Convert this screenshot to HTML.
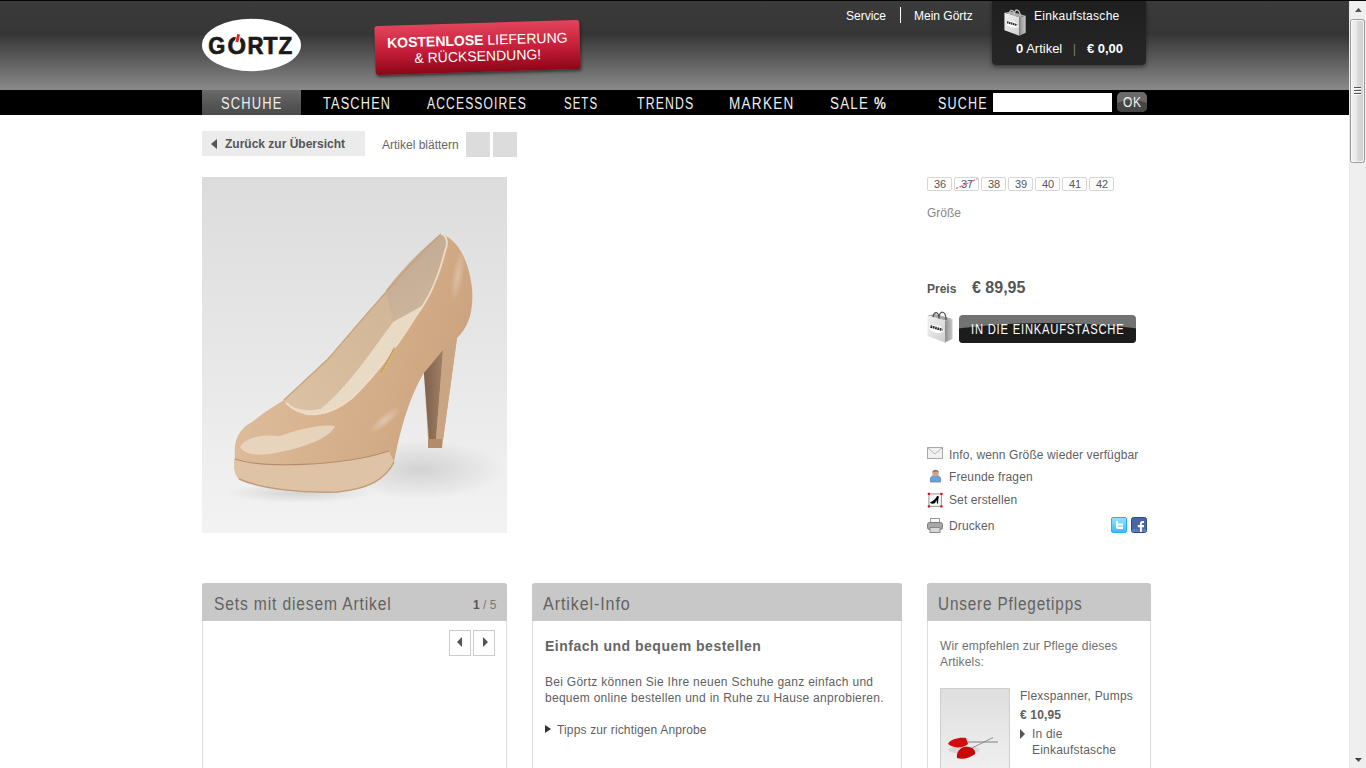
<!DOCTYPE html>
<html><head><meta charset="utf-8">
<style>
*{margin:0;padding:0;box-sizing:border-box}
html,body{width:1366px;height:768px;overflow:hidden;background:#fff;font-family:"Liberation Sans",sans-serif;color:#555}
.a{position:absolute;white-space:nowrap}
#hdr{position:absolute;left:0;top:0;width:1349px;height:90px;background:linear-gradient(to bottom,#1a1a1a 0,#1a1a1a 1px,#3b3b3b 1px,#363636 34px,#8a8a8a 90px)}
#nav{position:absolute;left:0;top:90px;width:1349px;height:25px;background:#000}
.nv{position:absolute;top:90px;height:25px;line-height:27px;font-size:16px;color:#eee}
.nvt span{display:inline-block;transform-origin:0 0;letter-spacing:1.5px}
.tl{font-size:12px;color:#fff;top:9px}
#cart{position:absolute;left:992px;top:0;width:154px;height:65px;background:linear-gradient(#1f1f1f,#262626);border-radius:0 0 4px 4px;box-shadow:0 2px 4px rgba(0,0,0,.45)}
#banner{position:absolute;left:375px;top:23px;width:205px;height:49px;transform:rotate(-1.7deg);background:linear-gradient(#e2445c,#c41c38 55%,#8c0618);border-radius:3px;box-shadow:1px 2px 3px rgba(0,0,0,.5);color:#fff;font-size:14px;line-height:16px;text-align:center;padding-top:9px}
#sb{position:absolute;left:1349px;top:1px;width:17px;height:767px;background:linear-gradient(to right,#e6e6e6,#f0f0f0 2px,#eeeeee)}
#topl{position:absolute;left:0;top:0;width:1366px;height:1px;background:#050505}

.pnl{height:200px;border:1px solid #dcdcdc;border-top:0;border-radius:3px 3px 0 0}
.ph{height:38px;margin:0 -1px;background:#c8c8c8;border-radius:3px 3px 0 0;font-size:18px;color:#626262;padding:11px 0 0 12px;line-height:21px}
.pt{display:inline-block;transform-origin:0 0;letter-spacing:1px}
.arr{width:22px;height:26px;border:1px solid #ccc;background:#fff}
.arr i{position:absolute;top:6px;width:0;height:0;border-top:5px solid transparent;border-bottom:5px solid transparent}

.sz{position:absolute;top:0;width:25px;height:14px;border:1px solid #d6d6d6;border-radius:2px;font-size:11px;line-height:13px;text-align:center;color:#555;padding-left:1px}
</style></head><body>
<div id="hdr"></div>
<div id="nav"></div>
<!-- logo -->
<svg class="a" style="left:200px;top:17px" width="104" height="57" viewBox="0 0 104 57">
<ellipse cx="51.5" cy="28" rx="49.5" ry="26.2" fill="#fff"/>
<g font-family="Liberation Sans" font-weight="bold" font-size="23.5" fill="#1a1a1c" stroke="#1a1a1c" stroke-width="0.7">
<text x="8.3" y="37" textLength="17" lengthAdjust="spacingAndGlyphs">G</text>
<text x="27.6" y="37" textLength="18.5" lengthAdjust="spacingAndGlyphs">O</text>
<text x="47.5" y="37" textLength="16" lengthAdjust="spacingAndGlyphs">R</text>
<text x="63.6" y="37" textLength="14" lengthAdjust="spacingAndGlyphs">T</text>
<text x="78.6" y="37" textLength="13.8" lengthAdjust="spacingAndGlyphs">Z</text>
</g>
<path d="M34.3,26 L37,15.8 L41.3,16.5 L39.5,26.4Z" fill="#fff"/>
<path d="M35.5,24.9 L37.2,16.9 L40,17.4 L38.3,25.3Z" fill="#e5231b"/>
</svg>
<div id="banner"><b>KOSTENLOSE</b> LIEFERUNG<br>&amp; RÜCKSENDUNG!</div>
<div class="a tl" style="left:846px">Service</div>
<div class="a" style="left:900px;top:7px;width:1px;height:16px;background:#fff"></div>
<div class="a tl" style="left:914px">Mein Görtz</div>
<div id="cart"></div>
<svg class="a" style="left:1004px;top:9px" width="22.1" height="27.2" viewBox="0 0 26 32">
<defs><linearGradient id="bf1004" x1="0" y1="0" x2="1" y2="1"><stop offset="0" stop-color="#f2f2f2"/><stop offset="1" stop-color="#cfcfcf"/></linearGradient>
<linearGradient id="bs1004" x1="0" y1="0" x2="1" y2="0"><stop offset="0" stop-color="#8c8c8c"/><stop offset="1" stop-color="#c8c8c8"/></linearGradient></defs>
<path d="M0.5,4.5 L8,3 L25.5,8 L18,9.5Z" fill="#a8a8a8"/>
<path d="M6,8 C6,0 12,-1 12,8 M12,7 C12,-1 19,-1 19,9" fill="none" stroke="#bbb" stroke-width="1.6"/>
<path d="M0.5,4.5 L18,9.5 L18,31.5 L0.5,25Z" fill="url(#bf1004)"/>
<path d="M18,9.5 L25.5,8 L25.5,28 L18,31.5Z" fill="url(#bs1004)"/>
<ellipse cx="9.5" cy="18" rx="7.5" ry="3.6" transform="rotate(16 9.5 18)" fill="#fff"/>
<path d="M3.5,15.5 L15.5,19" stroke="#222" stroke-width="2.4" stroke-dasharray="1.8,0.6"/>
<circle cx="9" cy="16.3" r="0.8" fill="#e33"/>
</svg>
<div class="a tl" style="left:1034px;top:9px;letter-spacing:0.3px">Einkaufstasche</div>
<div class="a" style="left:1016px;top:41px;font-size:13px;color:#fff"><b>0</b> Artikel <span style="color:#777;margin:0 7px 0 7px">|</span> <b>€ 0,00</b></div>
<div class="nv" style="left:202px;width:99px;background:linear-gradient(#6a6a6a,#555 60%,#4a4a4a)"></div>
<div class="nv nvt" style="left:221.2px"><span style="transform:scaleX(0.805)">SCHUHE</span></div>
<div class="nv nvt" style="left:322.6px"><span style="transform:scaleX(0.795)">TASCHEN</span></div>
<div class="nv nvt" style="left:427.0px"><span style="transform:scaleX(0.756)">ACCESSOIRES</span></div>
<div class="nv nvt" style="left:563.6px"><span style="transform:scaleX(0.713)">SETS</span></div>
<div class="nv nvt" style="left:637.0px"><span style="transform:scaleX(0.768)">TRENDS</span></div>
<div class="nv nvt" style="left:729.2px"><span style="transform:scaleX(0.847)">MARKEN</span></div>
<div class="nv nvt" style="left:830.2px"><span style="transform:scaleX(0.833)">SALE <b>%</b></span></div>
<div class="nv nvt" style="left:937.9px"><span style="transform:scaleX(0.783)">SUCHE</span></div>
<div class="a" style="left:993px;top:93px;width:119px;height:19px;background:#fff"></div>
<div class="a" style="left:1117px;top:92px;width:30px;height:20px;border-radius:5px;background:#6a6a6a;overflow:hidden">
<div style="position:absolute;left:-10px;top:8px;width:50px;height:30px;border-radius:50%;background:#464646"></div>
<div style="position:absolute;left:6.3px;top:0;height:20px;line-height:21px;font-size:14px;color:#f0f0f0;white-space:nowrap"><span style="display:inline-block;transform-origin:0 0;transform:scaleX(0.86);letter-spacing:0.6px">OK</span></div>
</div>

<!-- breadcrumb -->
<div class="a" style="left:202px;top:131px;width:163px;height:25px;background:#ebebeb"></div>
<div class="a" style="left:211px;top:138.5px;width:0;height:0;border-top:5px solid transparent;border-bottom:5px solid transparent;border-right:6px solid #555"></div>
<div class="a" style="left:225px;top:137px;font-size:12px;font-weight:bold;color:#555">Zurück zur Übersicht</div>
<div class="a" style="left:382px;top:138px;font-size:12px;color:#666">Artikel blättern</div>
<div class="a" style="left:466px;top:132px;width:24px;height:25px;background:#dcdcdc"></div>
<div class="a" style="left:493px;top:132px;width:24px;height:25px;background:#dcdcdc"></div>
<!-- product image -->
<svg class="a" style="left:202px;top:177px" width="305" height="356" viewBox="202 177 305 356">
<defs>
<linearGradient id="bgg" x1="0" y1="0" x2="0" y2="1"><stop offset="0" stop-color="#dcdcdc"/><stop offset="0.5" stop-color="#e7e7e7"/><stop offset="1" stop-color="#f3f3f3"/></linearGradient>
<radialGradient id="shd" cx="0.5" cy="0.5" r="0.5"><stop offset="0" stop-color="#000" stop-opacity="0.12"/><stop offset="1" stop-color="#000" stop-opacity="0"/></radialGradient>
<linearGradient id="body" x1="0" y1="0" x2="1" y2="0.3"><stop offset="0" stop-color="#e0c2a4"/><stop offset="0.5" stop-color="#d8b390"/><stop offset="1" stop-color="#cda47f"/></linearGradient>
<linearGradient id="lin" x1="1" y1="0" x2="0" y2="1"><stop offset="0" stop-color="#cdb398"/><stop offset="0.5" stop-color="#d3b899"/><stop offset="1" stop-color="#dcc2a4"/></linearGradient>
<linearGradient id="heelg" x1="0" y1="0" x2="1" y2="0"><stop offset="0" stop-color="#7d604c"/><stop offset="1" stop-color="#a07f66"/></linearGradient>
<radialGradient id="gl" cx="0.5" cy="0.5" r="0.5"><stop offset="0" stop-color="#fff" stop-opacity="0.55"/><stop offset="1" stop-color="#fff" stop-opacity="0"/></radialGradient>
</defs>
<rect x="202" y="177" width="305" height="356" fill="url(#bgg)"/>
<ellipse cx="420" cy="470" rx="85" ry="30" fill="url(#shd)"/>
<ellipse cx="300" cy="493" rx="75" ry="10" fill="url(#shd)"/>
<!-- body -->
<path d="M235,456 C233,440 240,428 252,422 C262,414 274,406 284,400 L328,359 C360,322 410,262 441,234 C455,238 468,255 472,288 C474,312 468,328 457,338 L443,440 L442,448 L428,448 L428,439 L424,373 C410,395 400,430 394,462 C385,480 368,489 337,492 C300,493 262,489 239,479 C234,474 233,465 235,456Z" fill="url(#body)"/>
<!-- platform band -->
<path d="M235,459 C262,468 340,467 389,451 L394,462 C385,480 368,489 337,492 C300,493 262,489 239,479 C234,474 233,465 235,459Z" fill="#dfc3a6"/>
<path d="M235,459 C262,468 340,467 389,451" fill="none" stroke="#b58d6c" stroke-width="1.2"/>
<path d="M239,479 C262,489 300,493 337,492 C368,489 385,480 394,462" fill="none" stroke="#c29a76" stroke-width="1.5"/>
<!-- lining -->
<path d="M284,401 L328,359 C360,322 410,262 441,234 C448,236 448,244 445,251 C438,280 428,300 416,316 C398,345 376,375 352,398 C330,416 305,421 284,401Z" fill="#e8dac5"/>
<path d="M284,401 L328,359 C360,322 410,262 441,234 L424,297 L393,322 C375,345 350,385 320,409 C306,412 292,409 284,401Z" fill="url(#lin)"/>
<defs><linearGradient id="hc" x1="0" y1="0" x2="0.3" y2="1"><stop offset="0" stop-color="#c0a892"/><stop offset="1" stop-color="#cdb59c"/></linearGradient></defs><path d="M386,290 C400,272 420,250 441,234 C447,237 447,244 445,251 C440,272 432,292 422,306 L393,322 C390,310 388,300 386,290Z" fill="url(#hc)"/>
<path d="M320,409 C350,385 375,345 393,322" fill="none" stroke="#cdb69c" stroke-width="1" stroke-dasharray="1.5,1.5"/>
<!-- collar edge highlight -->
<path d="M284,400 L328,359 C360,322 410,262 441,234" fill="none" stroke="#c9a07a" stroke-width="1.2"/>
<path d="M441,234 C448,236 448,244 445,251 C438,280 428,300 416,316 C398,345 376,375 352,398 C330,416 305,421 286,403" fill="none" stroke="#efdcc6" stroke-width="1.8"/>
<!-- heel -->
<path d="M424,373 L443,350 L436,440 L429,440Z" fill="url(#heelg)"/>
<path d="M457,338 L443,440 L436,440 L443,350Z" fill="#caa584"/>
<rect x="428" y="439" width="14" height="9" fill="#b38c6a"/>
<!-- label -->
<path d="M379,374 L394,347 L398,349 L383,376Z" fill="#d4b07c"/><path d="M381,372 L394,349" stroke="#8a6a40" stroke-width="0.6" stroke-dasharray="1,0.8"/>
<!-- glossy highlights -->
<path d="M240,447 C246,437 262,434 280,436 C298,430 318,424 335,426 C330,438 305,448 270,454 C256,456 244,454 240,447Z" fill="#e9d6c0" opacity="0.9"/>
<ellipse cx="458" cy="275" rx="6" ry="30" fill="url(#gl)" opacity="0.5" transform="rotate(10 458 275)"/>
<ellipse cx="385" cy="420" rx="20" ry="6" fill="url(#gl)" opacity="0.6" transform="rotate(-40 385 420)"/>
</svg>
<!-- sizes -->
<div class="a" id="sizes" style="left:927px;top:177px"><div class="sz" style="left:0px">36</div><div class="sz" style="left:27px">37</div><div class="sz" style="left:54px">38</div><div class="sz" style="left:81px">39</div><div class="sz" style="left:108px">40</div><div class="sz" style="left:135px">41</div><div class="sz" style="left:162px">42</div><svg style="position:absolute;left:27px;top:0" width="25" height="14"><line x1="2" y1="11.5" x2="23.5" y2="1.8" stroke="#e8607a" stroke-width="1.1" stroke-dasharray="2.5,1.2"/></svg></div>
<div class="a" style="left:927px;top:206px;font-size:12px;color:#888">Größe</div>
<div class="a" style="left:927px;top:282px;font-size:12px;font-weight:bold;color:#555">Preis</div>
<div class="a" style="left:972px;top:279px;font-size:16px;font-weight:bold;color:#555">€ 89,95</div>
<!-- add to cart -->
<svg class="a" style="left:927px;top:311px" width="26.0" height="32.0" viewBox="0 0 26 32">
<defs><linearGradient id="bf927" x1="0" y1="0" x2="1" y2="1"><stop offset="0" stop-color="#f2f2f2"/><stop offset="1" stop-color="#cfcfcf"/></linearGradient>
<linearGradient id="bs927" x1="0" y1="0" x2="1" y2="0"><stop offset="0" stop-color="#8c8c8c"/><stop offset="1" stop-color="#c8c8c8"/></linearGradient></defs>
<path d="M0.5,4.5 L8,3 L25.5,8 L18,9.5Z" fill="#a8a8a8"/>
<path d="M6,8 C6,0 12,-1 12,8 M12,7 C12,-1 19,-1 19,9" fill="none" stroke="#4a4a4a" stroke-width="1.2"/>
<path d="M0.5,4.5 L18,9.5 L18,31.5 L0.5,25Z" fill="url(#bf927)"/>
<path d="M18,9.5 L25.5,8 L25.5,28 L18,31.5Z" fill="url(#bs927)"/>
<ellipse cx="9.5" cy="18" rx="7.5" ry="3.6" transform="rotate(16 9.5 18)" fill="#fff"/>
<path d="M3.5,15.5 L15.5,19" stroke="#222" stroke-width="2.4" stroke-dasharray="1.8,0.6"/>
<circle cx="9" cy="16.3" r="0.8" fill="#e33"/>
</svg>
<div class="a" style="left:959px;top:315px;width:177px;height:28px;border-radius:4px;background:#727272;overflow:hidden">
  <div style="position:absolute;left:-61.5px;top:7.5px;width:300px;height:57px;border-radius:50%;background:#1c1c1c"></div>
  <div style="position:absolute;left:12px;top:0;width:152px;height:28px;color:#fff;font-size:14px;line-height:29px;white-space:nowrap"><span id="cbt" style="display:inline-block;transform-origin:0 0;transform:scaleX(0.80);letter-spacing:1px">IN DIE EINKAUFSTASCHE</span></div>
</div>
<!-- links -->
<div class="a" style="left:949px;top:448px;font-size:12px;color:#5f5f5f;letter-spacing:0.12px">Info, wenn Größe wieder verfügbar</div>
<div class="a" style="left:949px;top:470px;font-size:12px;color:#5f5f5f;letter-spacing:0.12px">Freunde fragen</div>
<div class="a" style="left:949px;top:493px;font-size:12px;color:#5f5f5f;letter-spacing:0.12px">Set erstellen</div>
<div class="a" style="left:949px;top:519px;font-size:12px;color:#5f5f5f;letter-spacing:0.12px">Drucken</div>

<svg class="a" style="left:927px;top:447px" width="16" height="12" viewBox="0 0 16 12"><rect x="0.5" y="0.5" width="15" height="11" fill="#f0f0f0" stroke="#a9a9a9"/><path d="M0.5,0.5 L8,7 L15.5,0.5" fill="none" stroke="#b5b5b5"/></svg>
<svg class="a" style="left:929px;top:468px" width="13" height="15" viewBox="0 0 13 15"><path d="M1.5,14 C0.5,9 3,7.5 6.5,7.5 C10,7.5 12.5,9 11.5,14Z" fill="#6f9fd6" stroke="#5a7fae" stroke-width="0.8"/><circle cx="6.5" cy="5" r="3.2" fill="#c9a68c"/><path d="M3.3,4.5 C3.5,1 9.5,1 9.7,4.5 C8,3 5,3 3.3,4.5Z" fill="#8a6a55"/></svg>
<svg class="a" style="left:926.5px;top:491.5px" width="17" height="17" viewBox="0 0 17 17"><rect x="1.9" y="1.9" width="12.5" height="12.5" fill="#f4f7f8" stroke="#999" stroke-width="1"/><path d="M3.2,10.5 C3.5,9.8 4.5,9.5 5.8,8.9 C7,8.3 7.8,7.2 8.4,6.6 C9.2,5.5 9.8,4.2 10.5,4 C11.5,3.8 12.1,4.6 11.8,5.5 L11.5,6.3 C11.2,7.5 11.1,9.5 11.1,11.6 L10,11.6 L9.6,8 C8.8,9.5 8.2,11 7.9,11.3 C6.5,11.7 4.5,11.8 3.8,11.3 C3.3,11.1 3.1,10.8 3.2,10.5Z" fill="#000"/><g fill="#f00"><rect x="0.8" y="0.8" width="2.2" height="2.2"/><rect x="13.3" y="0.8" width="2.2" height="2.2"/><rect x="0.8" y="13.3" width="2.2" height="2.2"/><rect x="13.3" y="13.3" width="2.2" height="2.2"/></g></svg>
<svg class="a" style="left:927px;top:518px" width="16" height="15" viewBox="0 0 16 15"><rect x="3.5" y="0.5" width="9" height="5" fill="#fafafa" stroke="#999"/><rect x="0.5" y="4.5" width="15" height="7" rx="2" fill="#a8a8a8" stroke="#7a7a7a"/><rect x="3" y="9.5" width="10" height="5" fill="#d8d8d8" stroke="#888"/></svg>
<svg class="a" style="left:1111px;top:517px" width="16" height="16" viewBox="0 0 16 16"><defs><linearGradient id="twg" x1="0" y1="0" x2="0" y2="1"><stop offset="0" stop-color="#9ae2ff"/><stop offset="1" stop-color="#2fc0ff"/></linearGradient></defs><rect x="0.5" y="0.5" width="15" height="15" rx="1.5" fill="url(#twg)" stroke="#1eb4fb"/><path d="M5.1,3.9 L6.9,3.9 L6.9,6.5 L12,6.5 L12,8.6 L6.9,8.6 L6.9,9.4 L12,9.4 L12,11.9 L6.5,11.9 C5.6,11.9 5.1,11.3 5.1,10.5Z" fill="#fff"/></svg>
<svg class="a" style="left:1131px;top:517px" width="16" height="16" viewBox="0 0 16 16"><rect x="0.5" y="0.5" width="15" height="15" rx="2" fill="#4866a6" stroke="#2c4a8c"/><rect x="1" y="12" width="14" height="3" fill="#5c7cbc"/><path d="M9,14.9 L9,10.2 L6.8,10.2 L6.8,8 L9,8 L9,6.5 C9,4.7 10,3.9 11.5,3.9 L13,3.9 L13,5.9 L11.7,5.9 C11.1,5.9 10.9,6.2 10.9,6.8 L10.9,8 L13,8 L13,10.2 L10.9,10.2 L10.9,14.9Z" fill="#fff"/></svg>
<!-- panels -->
<div class="a pnl" style="left:202px;top:583px;width:305px"><div class="ph" style="padding-left:11.6px"><span class="pt" style="transform:scaleX(0.866)">Sets mit diesem Artikel</span></div></div>
<div class="a" style="left:473px;top:598px;font-size:12px;color:#777"><b style="color:#555">1</b> / 5</div>
<div class="a arr" style="left:449px;top:630px"><i style="border-right:5px solid #555;left:7px"></i></div>
<div class="a arr" style="left:473px;top:630px"><i style="border-left:5px solid #555;left:9px"></i></div>
<div class="a pnl" style="left:532px;top:583px;width:370px"><div class="ph" style="padding-left:11.4px"><span class="pt" style="transform:scaleX(0.894)">Artikel-Info</span></div></div>
<div class="a" style="left:545px;top:638px;font-size:14px;font-weight:bold;color:#666;letter-spacing:0.5px">Einfach und bequem bestellen</div>
<div class="a" style="left:545px;top:674px;font-size:12px;line-height:16px;color:#5f5f5f;letter-spacing:0.28px">Bei Görtz können Sie Ihre neuen Schuhe ganz einfach und<br>bequem online bestellen und in Ruhe zu Hause anprobieren.</div>
<div class="a" style="left:545px;top:725px;width:0;height:0;border-top:4px solid transparent;border-bottom:4px solid transparent;border-left:6px solid #333"></div>
<div class="a" style="left:557px;top:723px;font-size:12px;color:#5f5f5f;letter-spacing:0.15px">Tipps zur richtigen Anprobe</div>
<div class="a pnl" style="left:927px;top:583px;width:224px"><div class="ph" style="padding-left:10.6px"><span class="pt" style="transform:scaleX(0.85)">Unsere Pflegetipps</span></div></div>
<div class="a" style="left:940px;top:638px;font-size:12px;line-height:16px;color:#707070;letter-spacing:0.15px">Wir empfehlen zur Pflege dieses<br>Artikels:</div>
<svg class="a" style="left:940px;top:688px" width="70" height="85" viewBox="0 0 70 85"><defs><linearGradient id="thb" x1="0" y1="0" x2="0" y2="1"><stop offset="0" stop-color="#dedede"/><stop offset="1" stop-color="#f0f0f0"/></linearGradient></defs>
<rect x="0.5" y="0.5" width="69" height="84" fill="url(#thb)" stroke="#cfcfcf"/>
<ellipse cx="24" cy="62" rx="16" ry="4" fill="#d8d8d8"/>
<path d="M25,54 L58,54" stroke="#666" stroke-width="0.8"/><path d="M32,60 L53,49.5" stroke="#777" stroke-width="0.8"/>
<path d="M8,56 C10,51 20,49 26,50 L28,56 C24,60 14,61 8,56Z" fill="#d40c0c"/>
<path d="M17,70 C16,63 22,58 28,59 C32,59 36,62 35,66 C30,70 22,72 17,70Z" fill="#c80808"/>
</svg>
<div class="a" style="left:1020px;top:689px;font-size:12px;color:#5f5f5f;letter-spacing:0.2px">Flexspanner, Pumps</div>
<div class="a" style="left:1020px;top:708px;font-size:12px;font-weight:bold;color:#606060;letter-spacing:0.15px">€ 10,95</div>
<div class="a" style="left:1020px;top:729px;width:0;height:0;border-top:5px solid transparent;border-bottom:5px solid transparent;border-left:5.5px solid #555"></div>
<div class="a" style="left:1032px;top:726px;font-size:12px;line-height:16px;color:#5f5f5f;letter-spacing:0.2px">In die<br>Einkaufstasche</div>
<div id="sb">
<svg width="17" height="767" style="position:absolute;left:0;top:0">
<defs>
<linearGradient id="thg" x1="0" x2="1" y1="0" y2="0"><stop offset="0" stop-color="#f4f4f4"/><stop offset="0.45" stop-color="#e8e8e8"/><stop offset="0.5" stop-color="#dadada"/><stop offset="1" stop-color="#cfcfcf"/></linearGradient>
<linearGradient id="arg" x1="0" x2="1" y1="0" y2="1"><stop offset="0" stop-color="#202020"/><stop offset="1" stop-color="#777"/></linearGradient>
</defs>
<path d="M6 11 L9.5 7 L13 11Z" fill="url(#arg)"/>
<rect x="1.5" y="18.5" width="14" height="143" rx="2" fill="url(#thg)" stroke="#9b9b9b"/>
<rect x="2.5" y="19.5" width="12" height="141" rx="1.5" fill="none" stroke="#fafafa" stroke-opacity="0.8"/>
<g stroke="#555" stroke-width="1"><line x1="5" y1="86.5" x2="12" y2="86.5"/><line x1="5" y1="89.5" x2="12" y2="89.5"/><line x1="5" y1="92.5" x2="12" y2="92.5"/></g>
<g stroke="#fff" stroke-width="1"><line x1="5" y1="87.5" x2="12" y2="87.5"/><line x1="5" y1="90.5" x2="12" y2="90.5"/><line x1="5" y1="93.5" x2="12" y2="93.5"/></g>
<path d="M6 757 L13 757 L9.5 761Z" fill="url(#arg)"/>
</svg></div>
<div id="topl"></div>
</body></html>
